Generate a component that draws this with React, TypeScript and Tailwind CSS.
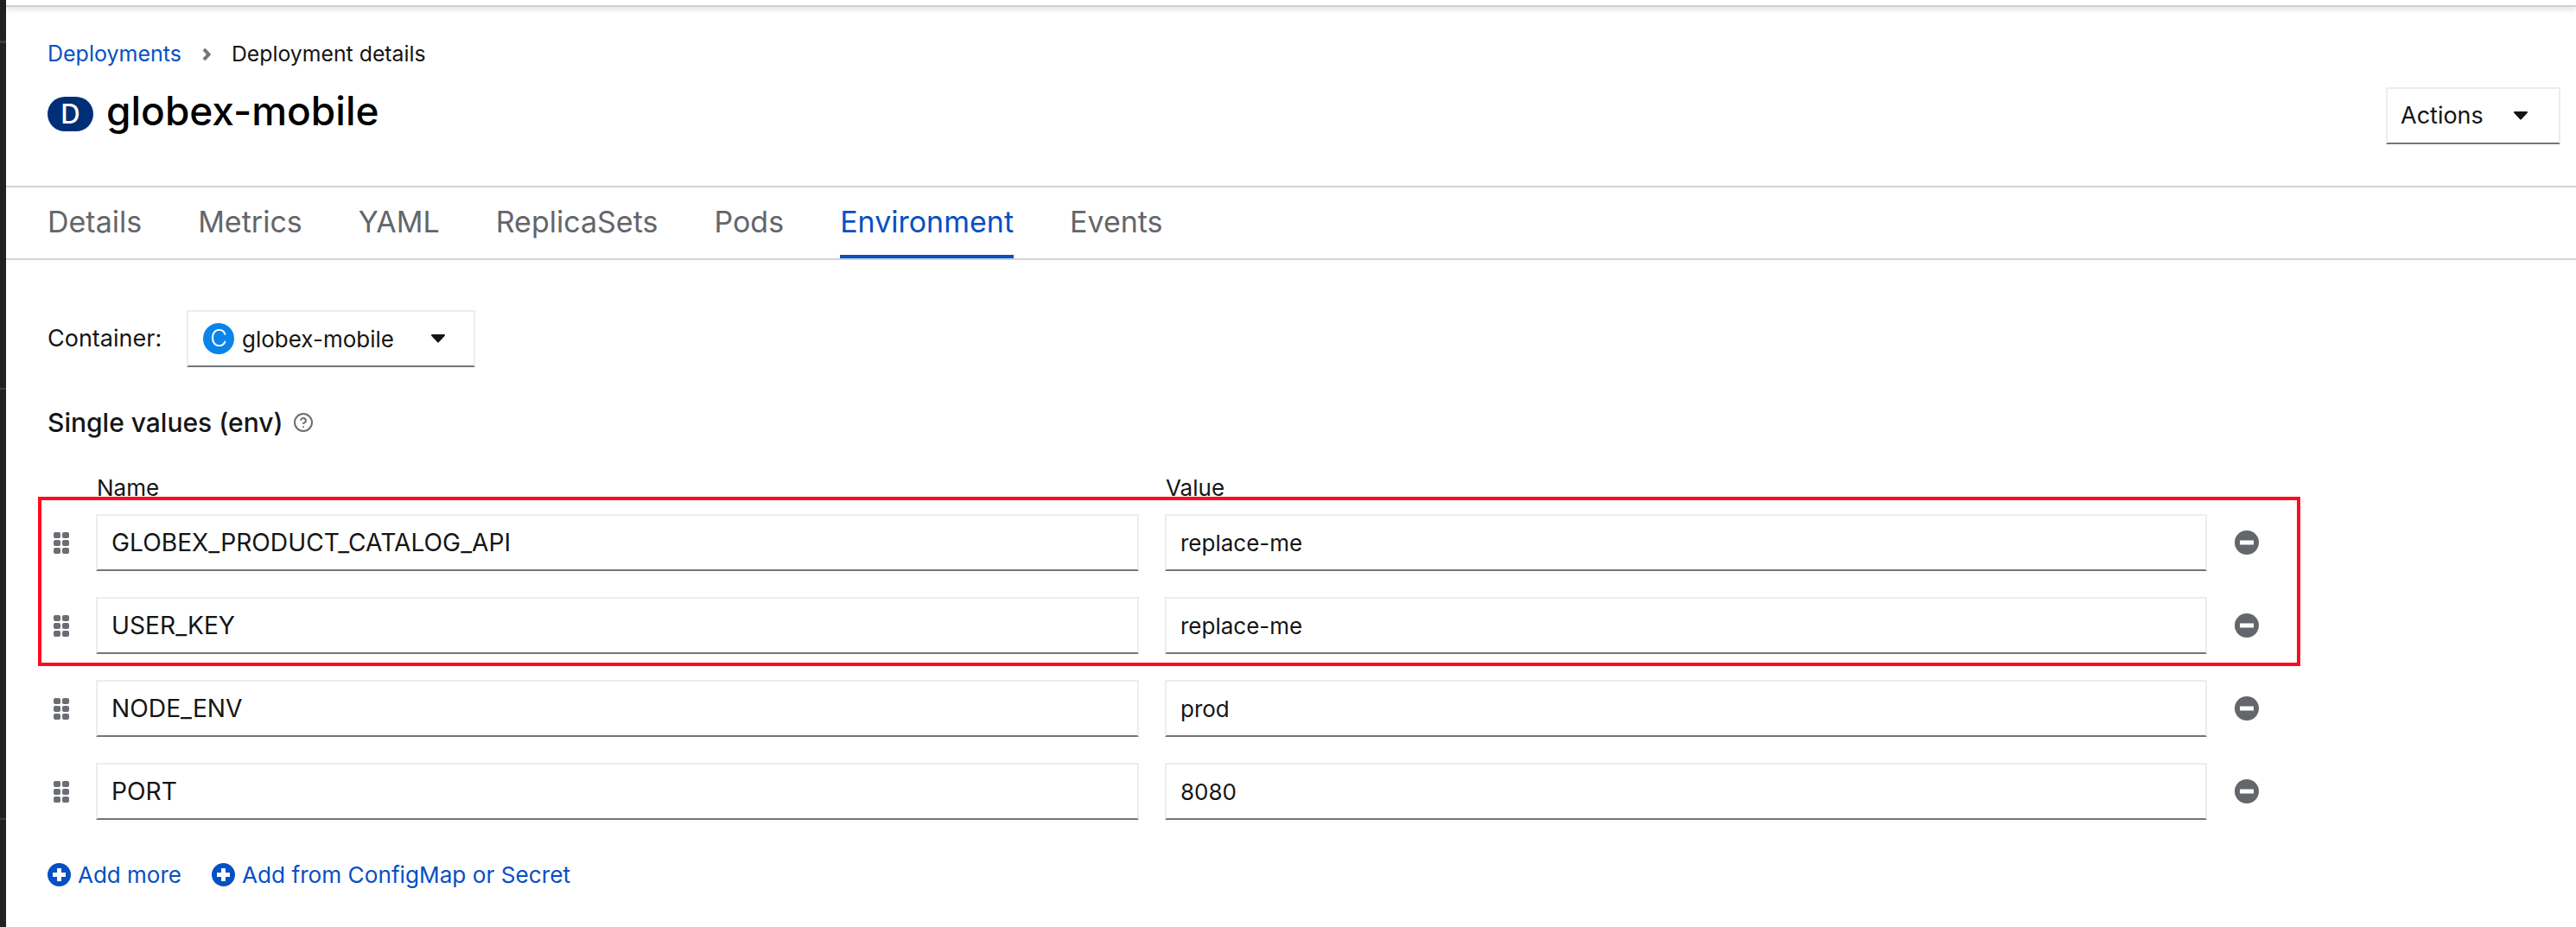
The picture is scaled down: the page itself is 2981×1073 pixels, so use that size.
import React from 'react';
import { CircleHelp } from 'lucide-react';

const tabs = ['Details', 'Metrics', 'YAML', 'ReplicaSets', 'Pods', 'Environment', 'Events'];

const envVars = [
  { name: 'GLOBEX_PRODUCT_CATALOG_API', value: 'replace-me' },
  { name: 'USER_KEY', value: 'replace-me' },
  { name: 'NODE_ENV', value: 'prod' },
  { name: 'PORT', value: '8080' },
];

const Caret = () => (
  <svg viewBox="0 0 16 10" className="w-4 h-[10px] fill-[#151515]">
    <path d="M1 0h14c.9 0 1.300 1.100.7 1.700L8.700 9.300c-.4.4-1 .4-1.400 0L.3 1.700C-.3 1.100.1 0 1 0z" />
  </svg>
);

const PlusCircle = () => (
  <svg viewBox="0 0 27 27" className="w-[27px] h-[27px] shrink-0">
    <circle cx="13.500" cy="13.500" r="13.500" fill="#0550c4" />
    <rect x="11" y="6" width="5" height="15" fill="#fff" />
    <rect x="6" y="11" width="15" height="5" fill="#fff" />
  </svg>
);

const MinusCircle = () => (
  <svg viewBox="0 0 28 28" className="w-7 h-7 shrink-0">
    <circle cx="14" cy="14" r="14" fill="#63666a" />
    <rect x="6" y="11.500" width="16" height="5" fill="#fff" />
  </svg>
);

const Grip = () => (
  <div className="grid grid-cols-2 gap-[2px] w-[18px] shrink-0">
    {[0, 1, 2, 3, 4, 5].map((i) => (
      <span key={i} className="h-[7px] rounded-[2px] bg-[#6a6e73]" />
    ))}
  </div>
);

export default function App() {
  return (
    <div className="relative flex h-[1073px] overflow-hidden bg-white text-[#151515] font-['Inter','Liberation_Sans',sans-serif]">
      {/* Dark sidebar edge */}
      <div className="w-[7px] shrink-0 bg-[#1f2125]">
        <div className="h-[3px] mt-[47px] bg-[#3a3c40]" />
        <div className="h-[2px] mt-[399px] bg-[#3a3c40]" />
        <div className="h-[2px] mt-[496px] bg-[#3a3c40]" />
      </div>

      <div className="flex-1 min-w-0">
        <div className="h-[8px] border-b-2 border-[#cfcfcf] shadow-[0_3px_6px_rgba(0,0,0,0.12)]" />

        {/* Page header */}
        <div className="flex justify-between h-[209px] pl-[48px] pr-[18px] border-b-2 border-[#d2d2d2]">
          <div>
            <div className="flex items-center h-[36px] mt-[37px] text-[25px]">
              <a className="text-[#0550c4]">Deployments</a>
              <svg viewBox="0 0 10 14" className="w-[10px] h-[14px] mx-[24px] fill-none stroke-[#72767b] stroke-[4]">
                <path d="M2 1l5.500 6L2 13" />
              </svg>
              <span className="text-[24.800px]">Deployment details</span>
            </div>
            <div className="flex items-center gap-[15px] h-[52px] mt-[25px]">
              <span className="flex items-center justify-center w-[53px] h-[40px] rounded-[20px] bg-[#002f78] text-white text-[31px] font-medium">D</span>
              <h1 className="pb-[8px] text-[46px] leading-[52px] font-medium text-black">globex-mobile</h1>
            </div>
          </div>
          <button className="flex items-center justify-between w-[202px] h-[66px] mt-[93px] pl-[15px] pr-[36px] border-2 border-[#ededed] border-b-[#72767b] text-[27px]">
            Actions
            <Caret />
          </button>
        </div>

        {/* Tabs */}
        <div className="flex gap-[65px] h-[84px] pl-[48px] border-b-2 border-[#d2d2d2]">
          {tabs.map((tab) => (
            <div
              key={tab}
              className={`flex items-center h-[82px] text-[34px] ${
                tab === 'Environment' ? 'border-b-4 border-[#0550c4] text-[#0550c4]' : 'border-b-4 border-transparent text-[#63666a]'
              }`}
            >
              {tab}
            </div>
          ))}
        </div>

        {/* Environment tab */}
        <div className="pl-[48px] pt-[58px]">
          <div className="flex items-center">
            <span className="w-[161px] text-[27px]">Container:</span>
            <button className="flex items-center w-[334px] h-[66px] pl-[17px] border-2 border-[#ededed] border-b-[#72767b] text-[26px]">
              <span className="flex items-center justify-center w-[36px] h-[36px] rounded-full bg-[#0a84e8] text-white text-[27px] font-light">C</span>
              <span className="ml-[9px]">globex-mobile</span>
              <span className="ml-[43px]"><Caret /></span>
            </button>
          </div>

          <div className="flex items-center gap-[11px] h-[40px] mt-[44px]">
            <h2 className="text-[30px] font-medium">Single values (env)</h2>
            <CircleHelp className="w-[24px] h-[24px] text-[#6a6e73]" strokeWidth={2} />
          </div>

          <div className="flex gap-[30px] h-[30px] mt-[41px] pl-[57px] text-[26px] leading-[30px]">
            <span className="w-[1207px]">Name</span>
            <span>Value</span>
          </div>

          <div className="flex flex-col gap-[30px] mt-[15px]">
            {envVars.map((row) => (
              <div key={row.name} className="flex items-center pl-[7px]">
                <Grip />
                <div className="flex items-center w-[1207px] h-[66px] ml-[31px] pl-[16px] border-2 border-[#ededed] border-b-[#72767b] text-[28.200px]">
                  {row.name}
                </div>
                <div className="flex items-center w-[1206px] h-[66px] ml-[30px] pl-[16px] border-2 border-[#ededed] border-b-[#72767b] text-[26px]">
                  {row.value}
                </div>
                <span className="ml-[32px]"><MinusCircle /></span>
              </div>
            ))}
          </div>

          <div className="flex items-center mt-[44px] text-[26px] text-[#0550c4]">
            <PlusCircle />
            <span className="ml-[8px]">Add more</span>
            <span className="ml-[35px]"><PlusCircle /></span>
            <span className="ml-[8px] text-[26.200px]">Add from ConfigMap or Secret</span>
          </div>
        </div>
      </div>

      {/* Red annotation box */}
      <div className="absolute left-[44px] top-[575px] w-[2618px] h-[196px] border-4 border-[#ff0a1e] pointer-events-none" />
    </div>
  );
}
